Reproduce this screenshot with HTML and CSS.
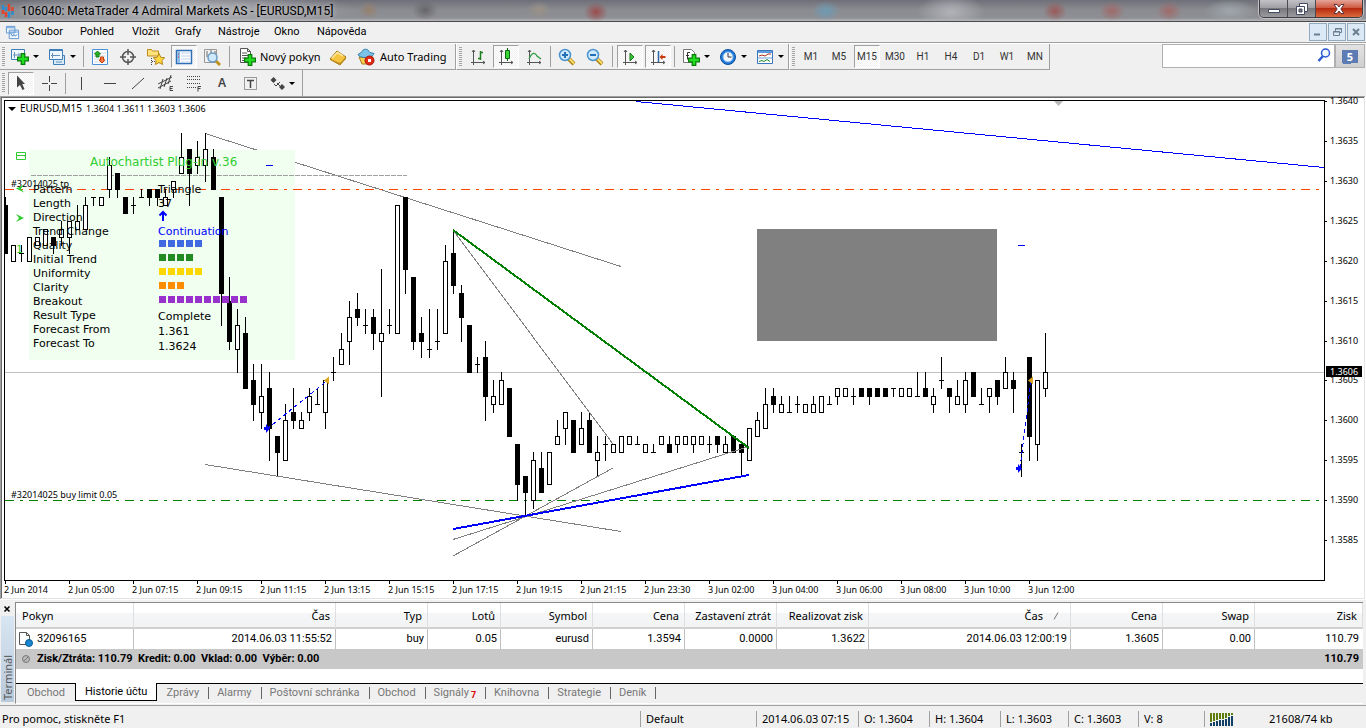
FILE: index.html
```html
<!DOCTYPE html>
<html lang="cs">
<head>
<meta charset="utf-8">
<title>106040: MetaTrader 4 Admiral Markets AS - [EURUSD,M15]</title>
<link rel="stylesheet" href="styles.css">
</head>
<body>
<svg class="defs" aria-hidden="true">
  <defs>
    <symbol id="plus" viewBox="0 0 10 10"><path d="M3.5.5h3v3h3v3h-3v3h-3v-3h-3v-3h3z" fill="#1fe01f" stroke="#087a08"/></symbol>
    <symbol id="lens" viewBox="0 0 18 18"><path d="M10.500 10.500l5.500 5.500" stroke="#a87b14" stroke-width="4"/><path d="M11 10.500l5 5" stroke="#ffe169" stroke-width="2"/><circle cx="7" cy="7" r="5.500" fill="#cfeaff" stroke="#4a93cf" stroke-width="1.500"/></symbol>
    <symbol id="axes" viewBox="0 0 18 18"><path d="M4.500 2v15M2 14.500h14M3 4l1.500-2L6 4M14 13l2 1.500-2 1.500" fill="none" stroke="#555"/></symbol>
  </defs>
</svg>

<header class="titlebar">
  <svg class="logo" viewBox="0 0 14 16"><path d="M2 3v7M5 5v3M8 1v7M11.500 4v6" stroke="#e0442e" stroke-width="2.500"/><path d="M2 2v5M5 4v4M8 9v6M11.500 8v4" stroke="#2d8fd0" stroke-width="2.500"/><path d="M2 8v3M5 9v5" stroke="#e0442e" stroke-width="2.500"/></svg>
  <h1 class="title">106040: MetaTrader 4 Admiral Markets AS - [EURUSD,M15]</h1>
  <div class="winctl">
    <button class="wbtn" aria-label="Minimalizovat"><svg width="14" height="14" viewBox="0 0 14 14"><path d="M1.500 7.500h11v3h-11z" fill="#fff" stroke="#444b60"/></svg></button>
    <button class="wbtn" aria-label="Obnovit"><svg width="14" height="14" viewBox="0 0 14 14"><path d="M4.500 1.500h8v8h-8z" fill="#fff" stroke="#444b60"/><path d="M1.500 4.500h8v8h-8z" fill="#fff" stroke="#444b60"/><path d="M4 7h3v3H4z" fill="#777" stroke="#444b60"/></svg></button>
    <button class="wbtn wclose" aria-label="Zavřít"><svg width="14" height="14" viewBox="0 0 14 14"><path d="M2 2.500h3l2 2.500 2-2.500h3L8.800 7l3.200 4.500H9L7 9l-2 2.500H2L5.200 7z" fill="#fff" stroke="#5a3038"/></svg></button>
  </div>
</header>

<nav class="menubar">
  <svg class="docicon" viewBox="0 0 16 16"><path d="M1.500 1.500h9v7h-9zM4.500 5.500h10v9h-10z" fill="#f7fbff" stroke="#5b93cf"/><path d="M2 3h8M5 7.500h9" stroke="#5b93cf"/><path d="M6 9l2 3 1.500-2 1.500 2 2-2" fill="none" stroke="#3977c4"/></svg>
  <button class="menu m1">Soubor</button><button class="menu m1">Pohled</button><button class="menu m2">Vložit</button><button class="menu m2">Grafy</button><button class="menu m3">Nástroje</button><button class="menu m2">Okno</button><button class="menu m3">Nápověda</button>
  <div class="mdictl">
    <button aria-label="Minimalizovat graf"><svg width="16" height="16" viewBox="0 0 16 16"><path d="M4 10.500h6" stroke="#6b7f92" stroke-width="2"/></svg></button>
    <button aria-label="Obnovit graf"><svg width="16" height="16" viewBox="0 0 16 16"><path d="M6.500 7V4.500h6v4H11M6 5h7" fill="none" stroke="#6b7f92"/><path d="M4.500 7.500h6v4h-6zM4 8h7" fill="none" stroke="#6b7f92"/></svg></button>
    <button aria-label="Zavřít graf"><svg width="16" height="16" viewBox="0 0 16 16"><path d="M5 5l6 6M11 5l-6 6" stroke="#6b7f92" stroke-width="2"/></svg></button>
  </div>
</nav>

<div class="toolrow">
  <div class="bar">
    <i class="grip"></i>
    <button class="drop" aria-label="Nový graf"><svg class="ic" viewBox="0 0 18 18"><path d="M.5 1.500h13v10H.5z" fill="#eef6ff" stroke="#3f7fb9"/><path d="M3.500 4v6M2 7h8M8 5v3" stroke="#6790b5"/><use href="#plus" x="6" y="5" width="12" height="12"/></svg><b></b></button>
    <button class="drop" aria-label="Profily"><svg class="ic" viewBox="0 0 18 18"><path d="M5.500 7.500h11v9h-11z" fill="#d9eaf9" stroke="#3f7fb9"/><path d="M1.500 1.500h13v10h-13z" fill="#eef6ff" stroke="#3f7fb9"/><path d="M2 2.500h12" stroke="#3f7fb9"/><path d="M4.500 5v5M3 7.500h9M8 14h6" stroke="#6790b5"/></svg><b></b></button>
    <i class="sep"></i>
    <button class="tb" aria-label="Přehled trhu"><svg class="ic" viewBox="0 0 18 18"><path d="M1.500 1.500h15v15h-15z" fill="#fff" stroke="#4a93d6"/><path d="M3 5h12M3 8h12M3 11h12M3 14h12" stroke="#d0dae5"/><path d="M6.500 3l3 3H8v3H5V6H3.500z" fill="#28b428" stroke="#108010"/><path d="M11 15l-3-3h1.500V9h3v3H14z" fill="#ff7a3c" stroke="#c3400d"/></svg></button>
    <button class="tb" aria-label="Okno dat"><svg class="ic" viewBox="0 0 18 18"><circle cx="9" cy="9" r="5.500" fill="none" stroke="#555" stroke-width="1.500"/><path d="M9 1v6M9 11v6M1 9h6M11 9h6" stroke="#555" stroke-width="1.500"/></svg></button>
    <button class="tb" aria-label="Navigátor"><svg class="ic" viewBox="0 0 18 18"><path d="M.5 1.500h4l1 1.500h6v5H.5z" fill="#ffe27a" stroke="#bb8c19"/><path d="M4.500 10v7M5 13.500h3" stroke="#444" stroke-dasharray="1 1"/><path d="M12 5.500l1.800 3.800 3.900.5-2.900 2.700.8 4-3.600-2-3.600 2 .8-4-2.900-2.700 3.900-.5z" fill="#ffd93e" stroke="#b5851a"/></svg></button>
    <button class="tb on" aria-label="Terminál"><svg class="ic" viewBox="0 0 18 18"><path d="M1.500 2.500h15v13h-15z" fill="#fff" stroke="#2e6eb4" stroke-width="1.500"/><path d="M2 3h3v12H2z" fill="#8fbde6"/><path d="M6 5h10M6 8h10M6 11h10M6 14h10" stroke="#bfd3ee"/><path d="M3 6h1M3 9h1" stroke="#d03030"/></svg></button>
    <button class="tb" aria-label="Tester strategií"><svg class="ic" viewBox="0 0 18 18"><path d="M1.500 1.500h12v13h-12z" fill="#f2f2f2" stroke="#999"/><path d="M4 3v6M8 2v5M12 3v4" stroke="#666"/><path d="M13 13l4 4" stroke="#c0921c" stroke-width="3"/><circle cx="9.500" cy="9.500" r="4.500" fill="#cfe8fb" stroke="#6a9cc4" stroke-width="1.500"/></svg></button>
    <i class="sep wide"></i>
    <button class="txt neworder"><svg class="ic" viewBox="0 0 18 18"><path d="M2.500.5h7l3 3v11h-10z" fill="#fff" stroke="#555"/><path d="M9.500.5v3h3M4 5h5M4 7.500h7M4 10h5M4 12.500h4" fill="none" stroke="#555"/><use href="#plus" x="6" y="6" width="12" height="12"/></svg>Nový pokyn</button>
    <button class="tb" aria-label="MetaEditor"><svg class="ic" viewBox="0 0 18 18"><path d="M1 11l7-8 9 6-6 8z" fill="#f5c542" stroke="#a2761a"/><path d="M1 11l10 4 6-6v2l-6 6-10-5z" fill="#bd8b1d"/><path d="M3 10l5.500-5.500L14 8" fill="none" stroke="#ffe99d" stroke-width="1.500"/></svg></button>
    <button class="txt auto"><svg class="ic" viewBox="0 0 18 18"><path d="M2 9h14l-3 7H5z" fill="#f6cf52" stroke="#a87d1d"/><path d="M1 6.500c1-1 3-1 4-3 1-3 6-3 7 0 1 2 3 1 5 2-1 3-5 4-9 4s-6-1-7-3z" fill="#7cc3ea" stroke="#2a79ab"/><circle cx="12.500" cy="12.500" r="4.500" fill="#e12b17" stroke="#a91407"/><path d="M11 11h3v3h-3z" fill="#fff"/></svg>Auto Trading</button>
  </div>
  <div class="bar">
    <i class="grip"></i>
    <button class="tb" aria-label="Sloupcový graf"><svg class="ic" viewBox="0 0 18 18"><use href="#axes"/><path d="M11.500 3v9M9 10.500h2.500M11.500 4.500H14" stroke="#1b7d1b" stroke-width="1.500"/></svg></button>
    <button class="tb on" aria-label="Svíčkový graf"><svg class="ic" viewBox="0 0 18 18"><use href="#axes"/><path d="M10.500 0v13" stroke="#0d6b0d"/><path d="M8.500 2.500h4v8h-4z" fill="#36d436" stroke="#0d6b0d"/></svg></button>
    <button class="tb" aria-label="Čárový graf"><svg class="ic" viewBox="0 0 18 18"><use href="#axes"/><path d="M4 11c3-7 6-7 8-3l4 3" fill="none" stroke="#2f9a3d" stroke-width="1.300"/></svg></button>
    <i class="sep"></i>
    <button class="tb" aria-label="Přiblížit"><svg class="ic" viewBox="0 0 18 18"><use href="#lens"/><path d="M7 4v6M4 7h6" stroke="#2470b7" stroke-width="2"/></svg></button>
    <button class="tb" aria-label="Oddálit"><svg class="ic" viewBox="0 0 18 18"><use href="#lens"/><path d="M4 7h6" stroke="#2470b7" stroke-width="2"/></svg></button>
    <i class="sep wide"></i>
    <button class="tb on" aria-label="Automatický posun"><svg class="ic" viewBox="0 0 18 18"><use href="#axes"/><path d="M9 5l4 4-4 4z" fill="#37c837" stroke="#177517"/></svg></button>
    <button class="tb on" aria-label="Odsazení grafu"><svg class="ic" viewBox="0 0 18 18"><use href="#axes"/><path d="M9.500 3v11" stroke="#2b66a5" stroke-width="1.500"/><path d="M10.500 9l3-3v2h3v2h-3v2z" fill="#c93a0e"/></svg></button>
    <i class="sep"></i>
    <button class="drop last" aria-label="Indikátory"><svg class="ic" viewBox="0 0 18 18"><path d="M1.500 1.500h8l3 3v10h-11z" fill="#fff" stroke="#777"/><path d="M8 4.500H5.500v7M4 7.500h3" fill="none" stroke="#333"/><use href="#plus" x="6" y="6" width="12" height="12"/></svg><b></b></button>
    <button class="drop last" aria-label="Periody"><svg class="ic" viewBox="0 0 18 18"><circle cx="9" cy="9" r="7.500" fill="#1e78d8" stroke="#0c4fa0"/><circle cx="9" cy="9" r="5" fill="#f1f6fb" stroke="#7fb6ea"/><path d="M9 5v4h3.500" fill="none" stroke="#333"/></svg><b></b></button>
    <button class="drop last" aria-label="Šablony"><svg class="ic" viewBox="0 0 18 18"><path d="M1.500 2.500h15v13h-15z" fill="#fff" stroke="#3976bd"/><path d="M2 4h14" stroke="#5c9ade" stroke-width="2"/><path d="M2 10h14" stroke="#6c9dd3"/><path d="M3 8l3-1 3 1 3-2h3" fill="none" stroke="#a52b16"/><path d="M3 13.500l3-1 2 1 3-2 3 2" fill="none" stroke="#1b8a2a"/></svg><b></b></button>
  </div>
  <div class="bar periods">
    <i class="grip"></i>
    <button class="tb">M1</button><button class="tb">M5</button><button class="tb on">M15</button><button class="tb">M30</button><button class="tb">H1</button><button class="tb">H4</button><button class="tb">D1</button><button class="tb">W1</button><button class="tb">MN</button>
  </div>
  <div class="search">
    <input type="text" aria-label="Hledat">
    <svg class="glass" viewBox="0 0 14 14"><path d="M6 8l-4.500 5" stroke="#2b59cf" stroke-width="2.500"/><circle cx="8.500" cy="5" r="4" fill="#f1f7ff" stroke="#2b59cf" stroke-width="1.500"/></svg>
    <button class="chat" aria-label="Zprávy komunity"><span>5</span></button>
  </div>
</div>

<div class="toolrow second">
  <div class="bar">
    <i class="grip"></i>
    <button class="tb on" aria-label="Kurzor"><svg class="ic" viewBox="0 0 18 18"><path d="M5 1.500v12l3-2.500 2.500 5 2-1-2.300-5H13z" fill="#444"/></svg></button>
    <button class="tb" aria-label="Nitkový kříž"><svg class="ic" viewBox="0 0 18 18"><path d="M9.500 2v6M9.500 11v6M2 9.500h6M11 9.500h6" stroke="#444"/></svg></button>
    <i class="sep"></i>
    <button class="tb" aria-label="Svislá linie"><svg class="ic" viewBox="0 0 18 18"><path d="M8.500 3v13" stroke="#444"/></svg></button>
    <button class="tb" aria-label="Vodorovná linie"><svg class="ic" viewBox="0 0 18 18"><path d="M3 9.500h12" stroke="#444"/></svg></button>
    <button class="tb" aria-label="Trendová linie"><svg class="ic" viewBox="0 0 18 18"><path d="M3 15L15 4" stroke="#444"/></svg></button>
    <button class="tb" aria-label="Ekvidistantní kanál"><svg class="ic" viewBox="0 0 18 18"><path d="M1 10l14-7M1 14L14 7M3 15L6 5M7 13l3-9M11 10l3-9" stroke="#444" fill="none"/><path d="M16 12.500h-3v4h3M13 14.500h2.500" stroke="#444" fill="none"/></svg></button>
    <button class="tb" aria-label="Fibonacci"><svg class="ic" viewBox="0 0 18 18"><path d="M2 2.500h14M2 5.500h14M2 9.500h14M2 13.500h9" stroke="#444" stroke-dasharray="1 1"/><path d="M16 12.500h-3v5M13 14.500h2.500" stroke="#444" fill="none"/></svg></button>
    <button class="tb letter" aria-label="Text">A</button>
    <button class="tb" aria-label="Popisek"><svg class="ic" viewBox="0 0 18 18"><path d="M3.500 3.500h12v12h-12z" fill="none" stroke="#444" stroke-dasharray="1 1"/><path d="M6 6.500h7M9.500 6v8" stroke="#444" stroke-width="1.500"/></svg></button>
    <button class="drop arrows" aria-label="Šipky"><svg class="ic" viewBox="0 0 18 18"><path d="M4.500 3L7.500 6l-3 3-3-3zM13 10l3 3-3 3-3-3z" fill="#444"/><path d="M5 10l2 2 4-4M8 9l4 4" fill="none" stroke="#444"/></svg><b></b></button>
  </div>
</div>

<main class="chartwin">
  <svg id="chart" class="chart" viewBox="0 96 1366 504" preserveAspectRatio="xMinYMin meet" role="img" aria-label="EURUSD,M15"></svg>
</main>

<section class="terminal">
  <div class="side">
    <button class="sideclose" aria-label="Zavřít terminál"><svg width="8" height="8" viewBox="0 0 8 8"><path d="M1.500 1.500l5 5M6.500 1.500l-5 5" stroke="#000" stroke-width="1.500"/></svg></button>
    <div class="sidename">Terminál</div>
  </div>
  <div class="panel">
    <div class="sheet">
    <table>
      <colgroup><col class="c118"><col class="c202"><col class="c92"><col class="c72"><col class="c92"><col class="c92"><col class="c92"><col class="c92"><col class="c202"><col class="c92"><col class="c92"><col></colgroup>
      <thead><tr><th class="l">Pokyn</th><th>Čas</th><th>Typ</th><th>Lotů</th><th>Symbol</th><th>Cena</th><th>Zastavení ztrát</th><th>Realizovat zisk</th><th class="sorted">Čas<svg width="8" height="8" viewBox="0 0 8 8"><path d="M1 7.500L5 .5" stroke="#777"/></svg></th><th>Cena</th><th>Swap</th><th>Zisk</th></tr></thead>
      <tbody>
        <tr><td class="l"><svg class="rowicon" viewBox="0 0 16 16"><path d="M1.500 1.500h7l3 3v9h-10z" fill="#fff" stroke="#555"/><path d="M8.500 1.500v3h3" fill="none" stroke="#555"/><circle cx="11" cy="12" r="3.500" fill="#1686d2" stroke="#0d5a94"/></svg>32096165</td><td>2014.06.03 11:55:52</td><td>buy</td><td>0.05</td><td>eurusd</td><td>1.3594</td><td>0.0000</td><td>1.3622</td><td>2014.06.03 12:00:19</td><td>1.3605</td><td>0.00</td><td>110.79</td></tr>
        <tr class="sum"><td class="l" colspan="11"><svg class="rowicon" viewBox="0 0 16 16"><circle cx="8" cy="8" r="3.500" fill="#bbb" stroke="#777"/><path d="M6 10l4-4" stroke="#777"/></svg>Zisk/Ztráta: 110.79&nbsp; Kredit: 0.00&nbsp; Vklad: 0.00&nbsp; Výběr: 0.00</td><td>110.79</td></tr>
      </tbody>
    </table>
    </div>
    <div class="tabs" role="tablist">
      <button role="tab" class="t60">Obchod</button><button role="tab" class="sel" aria-selected="true">Historie účtu</button><button role="tab">Zprávy</button><button role="tab">Alarmy</button><button role="tab">Poštovní schránka</button><button role="tab">Obchod</button><button role="tab">Signály<sub>7</sub></button><button role="tab">Knihovna</button><button role="tab">Strategie</button><button role="tab">Deník</button>
    </div>
  </div>
</section>

<footer class="status">
  <span class="help">Pro pomoc, stiskněte F1</span>
  <span class="s116">Default</span>
  <span class="s102">2014.06.03 07:15</span>
  <span class="s71">O: 1.3604</span>
  <span class="s71">H: 1.3604</span>
  <span class="s68">L: 1.3603</span>
  <span class="s70">C: 1.3603</span>
  <span class="s66">V: 8</span>
  <span class="net"><svg width="24" height="13" viewBox="0 0 24 13"><path d="M1 0v9M4 0v8M7 0v7M10 0v6M13 0v6M16 0v5M19 0v3M22 0v2" stroke="#5f7d0c" stroke-width="2"/><path d="M1 10v3M4 9v4M7 8v5M10 7v6M13 7v6M16 6v7M19 4v9M22 3v10" stroke="#123f66" stroke-width="2"/></svg>21608/74 kb</span>
</footer>
<script src="chart.js"></script>
</body>
</html>
```
FILE: styles.css
```css
* { box-sizing: border-box; }
body {
  margin: 0;
  height: 100vh;
  display: flex;
  flex-direction: column;
  overflow: hidden;
  background: #f0f0f0;
  color: #000;
  font: 11px/14px "Noto Sans", "Open Sans", sans-serif;
}
button { border: 0; background: none; padding: 0; margin: 0; font: inherit; color: inherit; }
svg { display: block; }
.defs { position: absolute; width: 0; height: 0; }

.titlebar {
  flex: none;
  display: flex;
  align-items: center;
  height: 22px;
  padding-left: 1px;
  border-bottom: 1px solid #4a4a4e;
  background:
    radial-gradient(ellipse 10px 9px at 369px 10px, #96806e, transparent),
    radial-gradient(ellipse 13px 10px at 425px 10px, #66666a, transparent),
    radial-gradient(ellipse 12px 9px at 539px 10px, #9b9187, transparent),
    radial-gradient(ellipse 12px 10px at 596px 12px, #9a4c4c, transparent),
    radial-gradient(ellipse 14px 10px at 826px 11px, #6d9bb5, transparent),
    radial-gradient(ellipse 34px 18px at 951px 12px, #b0b2b6, transparent),
    radial-gradient(ellipse 12px 10px at 1055px 11px, #9a5a5a, transparent),
    radial-gradient(ellipse 13px 10px at 1112px 11px, #a06a6a, transparent),
    radial-gradient(ellipse 13px 10px at 1169px 11px, #a06a6a, transparent),
    radial-gradient(ellipse 26px 12px at 1230px 11px, #9fa6ab, transparent),
    radial-gradient(ellipse 180px 20px at 180px 10px, #b4b5b9, transparent),
    linear-gradient(#6e6f78, #8a8b90 45%, #8e8f94 85%, #b8b8ba);
}
.logo { width: 14px; height: 16px; margin-right: 6px; }
.title { margin: 0; font: 400 12px/16px Roboto, "Noto Sans", sans-serif; text-shadow: 0 0 5px #d8d8da; flex: 1; }
.winctl {
  display: flex;
  align-self: flex-start;
  margin-right: 3px;
  border: 1px solid #3d3d42;
  border-top: 0;
  border-radius: 0 0 5px 5px;
  box-shadow: 0 0 0 1px #c2c2c5;
  overflow: hidden;
}
.wbtn {
  display: grid;
  place-items: center;
  width: 28px;
  height: 17px;
  border-right: 1px solid #4b4b50;
  background: linear-gradient(#c3c3c7, #a0a0a4 45%, #77777c 50%, #9b9b9f);
}
.wclose { width: 46px; border: 0; background: linear-gradient(#e5a598, #cf5a42 45%, #b62a10 50%, #dc6a3c); }

.menubar {
  flex: none;
  display: flex;
  align-items: center;
  height: 21px;
  padding-left: 5px;
  border-bottom: 1px solid #a0a0a0;
  font-family: Roboto, "Noto Sans", sans-serif;
}
.docicon { width: 15px; height: 15px; margin-right: 8px; }
.menu { text-align: left; white-space: nowrap; }
.m1 { width: 52px; }
.m2 { width: 43px; }
.m3 { width: 56px; }
.mdictl { display: flex; gap: 1px; margin-left: auto; padding-right: 1px; }
.mdictl button { width: 18px; height: 18px; border: 1px solid #93a9bd; background: #dbe9f7; }

.toolrow { flex: none; display: flex; height: 27px; border-top: 1px solid #fff; }
.toolrow.second { height: 26px; border-top: 0; }
.bar {
  display: flex;
  align-items: center;
  border-right: 1px solid #a0a0a0;
  border-bottom: 1px solid #a0a0a0;
  padding: 1px 0;
}
.second .bar { border-bottom: 0; padding-right: 1px; }
.bar + .bar { border-left: 1px solid #fff; }
.grip {
  width: 3px;
  height: 20px;
  margin: 0 2px;
  background: repeating-linear-gradient(#a5a5a5 0 1px, #f0f0f0 1px 2px);
}
.sep { width: 1px; height: 21px; margin: 0 2px; background: #a0a0a0; }
.sep.wide { margin: 0 3px; }
.ic { width: 18px; height: 18px; flex: none; }
.tb { width: 26px; height: 23px; margin: 0 1px; display: grid; place-items: center; border: 1px solid transparent; }
.tb.on {
  border-color: #a0a0a0 #fff #fff #a0a0a0;
  background: repeating-conic-gradient(#fff 0 25%, #f0f0f0 0 50%) 0 0 / 2px 2px;
}
.drop { display: flex; align-items: center; gap: 4px; width: 37px; padding-left: 4px; }
.drop b { border: 3px solid transparent; border-top-color: #000; border-bottom: 0; }
.txt { display: flex; align-items: center; gap: 4px; padding-left: 5px; white-space: nowrap; height: 23px; }
.neworder { width: 91px; }
.auto { width: 103px; padding-left: 5px; gap: 5px; }
.drop.last { padding-left: 5px; }
.drop.arrows { padding-left: 5px; gap: 2px; }
.periods { font: 10px/14px Roboto, "Noto Sans", sans-serif; color: #333; }
.letter { color: #444; font-size: 12px; font-weight: 600; }

.search { display: flex; margin-left: auto; align-self: flex-start; height: 24px; padding-right: 1px; }
.search input { width: 173px; height: 24px; border: 1px solid #b0b0b0; background: #fff; padding: 2px 20px 2px 4px; font: inherit; }
.glass { width: 14px; height: 14px; margin: 4px 4px 0 -18px; }
.chat { width: 30px; height: 24px; border: 1px solid #b0b0b0; background: linear-gradient(#e2e2e2, #d0d0d0); display: grid; place-items: center; }
.chat span {
  width: 16px;
  height: 13px;
  background: #5e7cb4;
  color: #fff;
  font-weight: 700;
  font-size: 11px;
  line-height: 13px;
  box-shadow: -3px 5px 0 -4px #5e7cb4;
}

.chartwin { flex: 1; min-height: 0; background: #fff; overflow: hidden; }
.chart { width: 100%; }
.chart text { font-family: "Noto Sans", sans-serif; white-space: pre; }
.chart .head { font-size: 10px; }
.chart .axis { font-size: 9px; }
.chart .plug { font-family: "DejaVu Sans", sans-serif; font-size: 11px; }
.chart .plugtitle { font-family: "DejaVu Sans", sans-serif; font-size: 12px; }

.terminal { flex: none; display: flex; padding: 2px 3px 1px 1px; height: 105px; }
.side { width: 14px; display: flex; flex-direction: column; align-items: flex-start; padding-bottom: 2px; }
.sideclose { width: 12px; height: 14px; display: grid; place-items: center; }
.sidename {
  flex: 1;
  width: 13px;
  background: linear-gradient(#b9cadb, #d8e5f2);
  color: #555;
  writing-mode: vertical-rl;
  transform: rotate(180deg);
  line-height: 13px;
  padding-top: 2px;
}
.panel { flex: 1; min-width: 0; display: flex; flex-direction: column; border-left: 1px solid #888; border-top: 1px solid #888; border-bottom: 1px solid #fff; }
.sheet { flex: 1; background: #fff; }
table { width: 100%; table-layout: fixed; border-collapse: separate; border-spacing: 0; }
.c118 { width: 118px; } .c202 { width: 202px; } .c92 { width: 92px; } .c72 { width: 73px; }
th, td { padding: 0 3px 0 0; text-align: right; font-weight: 400; white-space: nowrap; overflow: hidden; border-right: 1px solid #c0c0c0; }
th { height: 26px; padding: 1px 5px 0 0; background: linear-gradient(#fff 40%, #f4f6f8 41%, #f1f3f5); border-right-color: #dedfe1; border-bottom: 2px solid #d0d0d0; }
th.l { text-align: left; padding-left: 6px; }
td { height: 20px; font-family: Roboto, "Noto Sans", sans-serif; }
td.l { text-align: left; padding-left: 2px; }
tr td:last-child { border-right: 0; padding-right: 4px; }
.sorted svg { display: inline-block; margin: 0 4px 0 10px; }
.rowicon { width: 16px; height: 16px; display: inline-block; vertical-align: middle; margin-right: 3px; }
.sum td { background: #c8c8c8; border: 0; font-weight: 700; }

.tabs { display: flex; height: 20px; border-top: 1px solid #000; background: #f0f0f0; color: #777; font-family: Roboto, "Noto Sans", sans-serif; }
.tabs button { height: 18px; padding: 0 9px; white-space: nowrap; display: flex; align-items: center; }
.tabs button:nth-child(n+3)::after { content: ""; width: 1px; height: 12px; background: #666; margin: 0 -10px 0 9px; }
.tabs .t60 { width: 59px; padding-left: 11px; }
.tabs .sel { background: #fff; color: #000; border: 1px solid #000; border-top: 0; margin-top: -1px; }
.tabs sub { color: #e00000; font-size: 9px; line-height: 9px; font-weight: 700; padding: 4px 0 0 2px; }

.status { flex: none; display: flex; align-items: center; height: 23px; border-top: 1px solid #a0a0a0; padding: 4px 0 0 2px; }
.status span { height: 16px; line-height: 16px; padding-left: 5px; border-left: 1px solid #a0a0a0; white-space: nowrap; }
.status .help { flex: 1; border: 0; padding: 0; }
.s116 { width: 116px; } .s102 { width: 102px; } .s71 { width: 71px; } .s68 { width: 68px; } .s70 { width: 70px; } .s66 { width: 66px; }
.status .net { width: 162px; display: flex; align-items: center; gap: 35px; }
```
FILE: chart.js
```js
// Quotes in pips above 1.3500: high, body top, body bottom, low, 1 = falling candle.
const candles = [
[128,127,121,121,1],[122,122,120,120],[122,121,121,120],[123,123,120,120],[123,123,122,122],[124,124,122,122],[123,123,122,121,1],[125,124,123,122],
[125,125,123,121],[127,125,124,124],[128,127,124,124],[128,128,128,127],[128,128,127,127],[133,132,129,128],[131,131,129,128,1],[128,128,126,126,1],
[128,127,127,126],[129,128,128,128],[129,129,128,127,1],[129,129,128,127,1],[129,128,127,127],[130,130,129,128],[136,133,131,131],[134,134,131,127,1],
[135,133,132,131],[136,134,132,130],[134,133,129,129,1],[128,128,116,112,1],[118,115,110,109,1],[114,112,109,106],[113,111,104,104,1],[107,105,102,100,1],
[107,103,101,99],[106,104,99,95,1],[98,98,96,93,1],[102,100,95,95],[104,101,100,99,1],[101,100,99,99],[104,103,101,100],[104,102,102,102],
[105,105,101,99],[108,106,106,105],[111,109,107,107],[115,113,110,107],[116,114,113,112,1],[114,112,112,111],[114,113,111,109,1],[119,111,110,103],
[114,112,112,111],[127,127,111,111],[128,128,119,116,1],[118,118,110,109,1],[113,111,110,108,1],[114,109,109,108],[114,110,110,109],[122,120,111,111],
[124,121,117,116,1],[117,116,113,110,1],[112,112,106,106,1],[108,107,107,106],[110,108,103,100,1],[105,103,102,101],[106,105,102,102],[104,104,98,98,1],
[97,97,92,90,1],[93,93,91,88,1],[96,95,90,89],[96,94,91,91,1],[96,96,92,92],[100,98,97,97],[101,101,99,97],[100,100,96,96,1],
[101,99,97,97],[101,100,96,96,1],[98,96,95,93],[98,97,97,95],[97,97,96,96],[98,98,96,96],[98,98,97,97],[98,97,97,97],
[97,97,96,96],[97,96,96,96],[98,98,97,97],[98,97,96,96,1],[98,98,97,96],[98,98,97,97],[98,98,97,96],[98,98,97,97],
[98,97,97,96],[98,98,97,96,1],[98,97,96,96],[98,98,96,96,1],[97,97,96,93,1],[99,99,95,95],[101,100,98,98],[104,102,99,99],
[104,103,102,101,1],[103,102,101,101],[103,101,101,101],[103,102,102,101],[102,102,101,101],[103,102,101,101],[103,103,101,101],[103,102,102,102],
[104,104,103,102],[104,104,103,103],[104,103,103,102],[104,104,103,103,1],[104,104,103,102,1],[104,104,103,103,1],[104,104,103,103,1],[104,104,104,103],
[104,104,103,103],[104,104,103,103],[106,103,103,103],[106,104,103,103,1],[104,103,102,101],[108,105,105,104],[104,104,103,101,1],[105,103,102,102],
[106,105,102,101],[106,106,103,103,1],[104,102,102,102],[104,104,103,101],[105,105,103,102,1],[108,106,104,104],[106,105,104,101,1],[97,96,96,93],
[108,108,98,95,1],[105,105,97,95],[111,106,104,103]
];
const y = p => Math.round(101.3 + (140 - p) * 7.975);
const out = [];
const rect = (x, t, w, h, fill, extra = '') => out.push(`<rect x="${x}" y="${t}" width="${w}" height="${h}" fill="${fill}" ${extra}/>`);
const line = (a, b, c, d, stroke, w = 1, extra = '') => out.push(`<line x1="${a}" y1="${b}" x2="${c}" y2="${d}" stroke="${stroke}" stroke-width="${w}" ${extra}/>`);
const text = (x, b, cls, s, fill = '#000') => out.push(`<text x="${x}" y="${b}" class="${cls}" fill="${fill}">${s}</text>`);
const path = (d, fill) => out.push(`<path d="${d}" fill="${fill}"/>`);

out.push('<g shape-rendering="crispEdges">');
rect(0, 96, 1366, 504, '#fff');
rect(0, 96, 1365, 1, '#a0a0a0');
rect(1, 97, 1363, 1, '#696969');
rect(0, 96, 1, 503, '#a0a0a0');
rect(1, 97, 1, 502, '#696969');
rect(1364, 97, 1, 502, '#e3e3e3');
rect(1, 598, 1364, 1, '#e3e3e3');
rect(0, 599, 1366, 1, '#fff');

// Trend lines, drawn below the plug-in panel.
line(205, 133.5, 621, 266.5, '#808080');
rect(29, 150, 266, 210, '#f0fff0');
line(31, 175.5, 407, 175.5, '#a0a0a0', 1, 'stroke-dasharray="5 1"');
line(5, 189.5, 1324, 189.5, '#ff4500', 1, 'stroke-dasharray="9 6 3 6"');
line(5, 500.5, 1324, 500.5, '#008000', 1, 'stroke-dasharray="9 6 3 6"');
line(5, 372.5, 1324, 372.5, '#c0c0c0');

candles.forEach(([hi, top, bot, lo, down], i) => {
  const x = 5 + 8 * i;
  const t = y(top), h = y(bot) - t + 1;
  rect(x, y(hi), 1, y(lo) - y(hi) + 1, '#000');
  const left = Math.max(x - 2, 5);
  rect(left, t, x + 3 - left, h, '#000');
  if (!down && h > 2) rect(x - 1, t + 1, 3, h - 2, '#fff');
});

line(205, 464.5, 621, 531.5, '#808080');
line(453, 230, 613, 444, '#808080');
line(453, 539.5, 749, 446.5, '#808080');
line(453, 556, 613, 468, '#808080');
line(453, 230, 749, 448, '#008000', 2);
line(453, 529, 749, 475, '#0000ff', 2);
line(636, 101.5, 1324, 167.5, '#0000ff');
line(267, 429, 328, 380, '#0000ff', 1, 'stroke-dasharray="4 3"');
line(1020, 468, 1031, 380, '#0000ff', 1, 'stroke-dasharray="4 3"');
rect(757, 229, 240, 112, '#808080');
rect(266, 165, 7, 1, '#0000ff');
rect(1018, 245, 7, 1, '#0000ff');
out.push('</g>');
for (const [x, b] of [[264, 428], [1016, 468]]) path(`M${x} ${b - 1}h2v-3l4 4.500l-4 4.500v-3h-2z`, '#0000ff');
for (const x of [324, 1028]) path(`M${x} 380.500l5-4v8z`, '#daa520');

out.push('<g shape-rendering="crispEdges">');
rect(4, 100, 1321, 1, '#000');
rect(4, 100, 1, 481, '#000');
rect(1324, 100, 1, 481, '#000');
rect(4, 580, 1321, 1, '#000');
for (let p = 140; p >= 85; p -= 5) rect(1325, y(p), 2, 1, '#000');
for (let k = 0; k < 17; k++) rect(5 + 64 * k, 581, 1, 3, '#000');
const quality = [[240, 5, '#4169e1'], [254, 4, '#228b22'], [268, 5, '#ffd700'], [282, 3, '#ff8c00'], [296, 10, '#9932cc']];
for (const [t, n, c] of quality) for (let k = 0; k < n; k++) rect(159 + 9 * k, t, 7, 7, c);
out.push('</g>');

for (let p = 140; p >= 85; p -= 5) text(1330, y(p) + 3, 'axis', (1.35 + p / 10000).toFixed(4));
rect(1326, 366, 36, 11, '#000');
text(1330, 375, 'axis', '1.3606', '#fff');
['2 Jun 2014','2 Jun 05:00','2 Jun 07:15','2 Jun 09:15','2 Jun 11:15','2 Jun 13:15','2 Jun 15:15','2 Jun 17:15','2 Jun 19:15','2 Jun 21:15','2 Jun 23:30','3 Jun 02:00','3 Jun 04:00','3 Jun 06:00','3 Jun 08:00','3 Jun 10:00','3 Jun 12:00']
  .forEach((s, k) => text(4 + 64 * k, 593, 'axis', s));

path('M8 107h8l-4 4z', '#000');
path('M1054 101h9l-4.500 5z', '#b8b8b8');
text(20, 112, 'head', 'EURUSD,M15');
text(86, 112, 'axis', '1.3604 1.3611 1.3603 1.3606');
text(11, 187, 'axis', '#32014025 tp');
text(11, 498, 'axis', '#32014025 buy limit 0.05');

// Plug-in panel.
text(90, 166, 'plugtitle', 'Autochartist Plug-in v.36', '#32cd32');
['Pattern','Length','Direction','Trend Change','Quality','Initial Trend','Uniformity','Clarity','Breakout','Result Type','Forecast From','Forecast To']
  .forEach((s, k) => text(33, 193 + 14 * k, 'plug', s));
text(158, 193, 'plug', 'Triangle');
text(158, 207, 'plug', '37');
text(158, 235, 'plug', 'Continuation', '#0000ff');
text(158, 320, 'plug', 'Complete');
text(158, 335, 'plug', '1.361');
text(158, 350, 'plug', '1.3624');
text(16, 253, 'plug', '1', '#32cd32');
out.push('<path d="M163 221v-9M159.500 215.500l3.500-3.500 3.500 3.500" fill="none" stroke="#0000ff" stroke-width="2"/>');
out.push('<path d="M16.500 152.500h9v7h-9zM16 155.500h10" fill="none" stroke="#32cd32"/>');
path('M24 185l-8 3.500 8 4-3-4z', '#32cd32');
path('M16 214l8 4-8 4 3-4z', '#32cd32');
document.getElementById('chart').innerHTML = out.join('');
```
